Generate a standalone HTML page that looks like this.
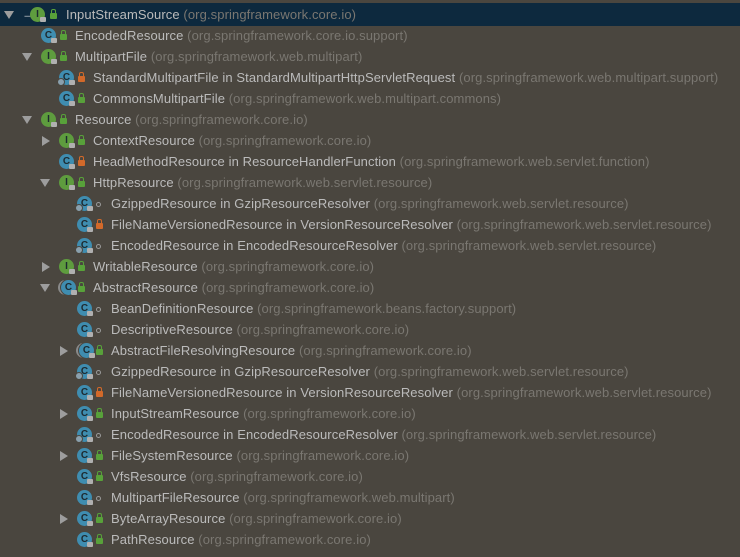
<!DOCTYPE html>
<html><head><meta charset="utf-8"><style>
body{margin:0;width:740px;height:557px;background:#4a463f;overflow:hidden;font-family:"Liberation Sans","Noto Sans CJK SC",sans-serif;font-size:13px;color:#bbbbbb}
.r{position:absolute;left:0;width:740px;height:21px}
.sel{background:#0d293e;top:3px!important;height:23px}
.t{position:absolute;top:3px;white-space:nowrap;line-height:15px;letter-spacing:0.1px}
.p{color:#7a7771}
.ic{position:absolute;top:3px;width:15px;height:15px;border-radius:50%;color:#1d2a30;font-size:10px;font-weight:bold;text-align:center;line-height:15px}
.C{background:#3f8db0}.I{background:#5e9c3e}
.A{box-shadow:0 0 0 1px #4a463f,-3px 0 0 0 #8a8a8a}
.g::before{content:"";position:absolute;left:-2px;top:8px;width:6px;height:6px;border-radius:50%;background:#8aa0ad;border:1px solid #4a463f}
.ic::after{content:"";position:absolute;left:10px;top:10px;width:6px;height:5px;background:#b0b0b0;border-radius:1px}
.lk{position:absolute;top:9px;width:7px;height:6px;background:#58a13a;border-radius:1px}
.lk::before{content:"";position:absolute;left:1px;top:-4px;width:3px;height:4px;border:1px solid #58a13a;border-bottom:none;border-radius:2px 2px 0 0}
.o{background:#d2692a}.o::before{border-color:#d2692a;left:1px}
.dot{position:absolute;top:9px;width:3px;height:3px;border-radius:50%;border:1px solid #9a9a9a}
.dn{position:absolute;top:7px;width:0;height:0;border-left:5px solid transparent;border-right:5px solid transparent;border-top:8px solid #9d9d9d}
.rt{position:absolute;top:6px;width:0;height:0;border-top:5px solid transparent;border-bottom:5px solid transparent;border-left:8px solid #9d9d9d}
</style></head><body>

<div class="r sel" style="top:4px"><div class="dn" style="left:4px;top:8px"></div><div style="position:absolute;left:21px;top:1px;color:#ddd;font-size:17px">→</div><div class="ic I" style="left:30px;top:4px">I</div><div class="lk" style="left:50px;top:10px"></div><div class="t" style="left:66px;top:4px">InputStreamSource <span class="p">(org.springframework.core.io)</span></div></div>

<div class="r" style="top:25px"><div class="ic C" style="left:41px">C</div><div class="lk" style="left:60px"></div><div class="t" style="left:75px">EncodedResource <span class="p">(org.springframework.core.io.support)</span></div></div>
<div class="r" style="top:46px"><div class="dn" style="left:22px"></div><div class="ic I" style="left:41px">I</div><div class="lk" style="left:60px"></div><div class="t" style="left:75px">MultipartFile <span class="p">(org.springframework.web.multipart)</span></div></div>
<div class="r" style="top:67px"><div class="ic C g" style="left:59px">C</div><div class="lk o" style="left:78px"></div><div class="t" style="left:93px">StandardMultipartFile in StandardMultipartHttpServletRequest <span class="p">(org.springframework.web.multipart.support)</span></div></div>
<div class="r" style="top:88px"><div class="ic C" style="left:59px">C</div><div class="lk" style="left:78px"></div><div class="t" style="left:93px">CommonsMultipartFile <span class="p">(org.springframework.web.multipart.commons)</span></div></div>
<div class="r" style="top:109px"><div class="dn" style="left:22px"></div><div class="ic I" style="left:41px">I</div><div class="lk" style="left:60px"></div><div class="t" style="left:75px">Resource <span class="p">(org.springframework.core.io)</span></div></div>
<div class="r" style="top:130px"><div class="rt" style="left:42px"></div><div class="ic I" style="left:59px">I</div><div class="lk" style="left:78px"></div><div class="t" style="left:93px">ContextResource <span class="p">(org.springframework.core.io)</span></div></div>
<div class="r" style="top:151px"><div class="ic C" style="left:59px">C</div><div class="lk o" style="left:78px"></div><div class="t" style="left:93px">HeadMethodResource in ResourceHandlerFunction <span class="p">(org.springframework.web.servlet.function)</span></div></div>
<div class="r" style="top:172px"><div class="dn" style="left:40px"></div><div class="ic I" style="left:59px">I</div><div class="lk" style="left:78px"></div><div class="t" style="left:93px">HttpResource <span class="p">(org.springframework.web.servlet.resource)</span></div></div>
<div class="r" style="top:193px"><div class="ic C g" style="left:77px">C</div><div class="dot" style="left:96px"></div><div class="t" style="left:111px">GzippedResource in GzipResourceResolver <span class="p">(org.springframework.web.servlet.resource)</span></div></div>
<div class="r" style="top:214px"><div class="ic C" style="left:77px">C</div><div class="lk o" style="left:96px"></div><div class="t" style="left:111px">FileNameVersionedResource in VersionResourceResolver <span class="p">(org.springframework.web.servlet.resource)</span></div></div>
<div class="r" style="top:235px"><div class="ic C g" style="left:77px">C</div><div class="dot" style="left:96px"></div><div class="t" style="left:111px">EncodedResource in EncodedResourceResolver <span class="p">(org.springframework.web.servlet.resource)</span></div></div>
<div class="r" style="top:256px"><div class="rt" style="left:42px"></div><div class="ic I" style="left:59px">I</div><div class="lk" style="left:78px"></div><div class="t" style="left:93px">WritableResource <span class="p">(org.springframework.core.io)</span></div></div>
<div class="r" style="top:277px"><div class="dn" style="left:40px"></div><div class="ic C A" style="left:61px">C</div><div class="lk" style="left:78px"></div><div class="t" style="left:93px">AbstractResource <span class="p">(org.springframework.core.io)</span></div></div>
<div class="r" style="top:298px"><div class="ic C" style="left:77px">C</div><div class="dot" style="left:96px"></div><div class="t" style="left:111px">BeanDefinitionResource <span class="p">(org.springframework.beans.factory.support)</span></div></div>
<div class="r" style="top:319px"><div class="ic C" style="left:77px">C</div><div class="dot" style="left:96px"></div><div class="t" style="left:111px">DescriptiveResource <span class="p">(org.springframework.core.io)</span></div></div>
<div class="r" style="top:340px"><div class="rt" style="left:60px"></div><div class="ic C A" style="left:79px">C</div><div class="lk" style="left:96px"></div><div class="t" style="left:111px">AbstractFileResolvingResource <span class="p">(org.springframework.core.io)</span></div></div>
<div class="r" style="top:361px"><div class="ic C g" style="left:77px">C</div><div class="dot" style="left:96px"></div><div class="t" style="left:111px">GzippedResource in GzipResourceResolver <span class="p">(org.springframework.web.servlet.resource)</span></div></div>
<div class="r" style="top:382px"><div class="ic C" style="left:77px">C</div><div class="lk o" style="left:96px"></div><div class="t" style="left:111px">FileNameVersionedResource in VersionResourceResolver <span class="p">(org.springframework.web.servlet.resource)</span></div></div>
<div class="r" style="top:403px"><div class="rt" style="left:60px"></div><div class="ic C" style="left:77px">C</div><div class="lk" style="left:96px"></div><div class="t" style="left:111px">InputStreamResource <span class="p">(org.springframework.core.io)</span></div></div>
<div class="r" style="top:424px"><div class="ic C g" style="left:77px">C</div><div class="dot" style="left:96px"></div><div class="t" style="left:111px">EncodedResource in EncodedResourceResolver <span class="p">(org.springframework.web.servlet.resource)</span></div></div>
<div class="r" style="top:445px"><div class="rt" style="left:60px"></div><div class="ic C" style="left:77px">C</div><div class="lk" style="left:96px"></div><div class="t" style="left:111px">FileSystemResource <span class="p">(org.springframework.core.io)</span></div></div>
<div class="r" style="top:466px"><div class="ic C" style="left:77px">C</div><div class="lk" style="left:96px"></div><div class="t" style="left:111px">VfsResource <span class="p">(org.springframework.core.io)</span></div></div>
<div class="r" style="top:487px"><div class="ic C" style="left:77px">C</div><div class="dot" style="left:96px"></div><div class="t" style="left:111px">MultipartFileResource <span class="p">(org.springframework.web.multipart)</span></div></div>
<div class="r" style="top:508px"><div class="rt" style="left:60px"></div><div class="ic C" style="left:77px">C</div><div class="lk" style="left:96px"></div><div class="t" style="left:111px">ByteArrayResource <span class="p">(org.springframework.core.io)</span></div></div>
<div class="r" style="top:529px"><div class="ic C" style="left:77px">C</div><div class="lk" style="left:96px"></div><div class="t" style="left:111px">PathResource <span class="p">(org.springframework.core.io)</span></div></div>
</body></html>
